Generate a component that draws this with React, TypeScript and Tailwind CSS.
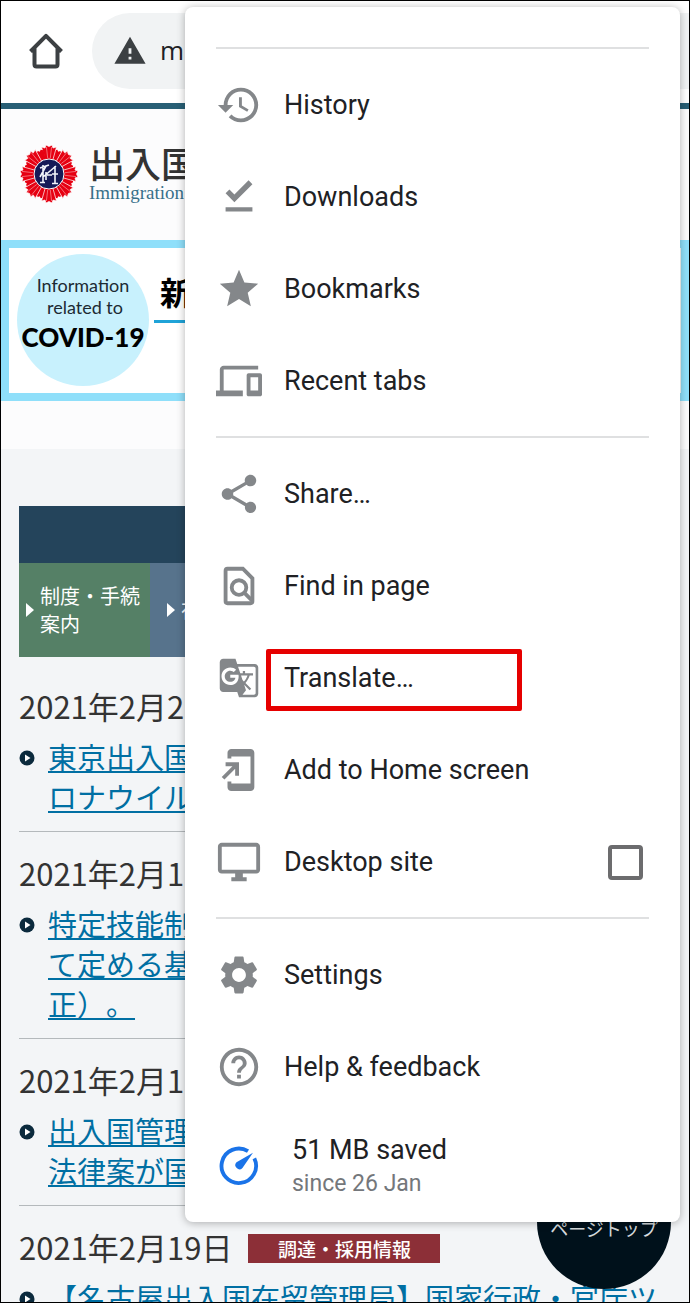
import type { ReactNode } from "react";
import {
  MdAddToHomeScreen,
  MdDevices,
  MdGTranslate,
  MdHelpOutline,
  MdHistory,
  MdOutlineDesktopWindows,
  MdSettings,
  MdShare,
  MdStar,
  MdWarning,
} from "react-icons/md";

type MenuItem = {
  label: string;
  icon: ReactNode;
  highlighted?: boolean;
};

type NewsItem = {
  date: string;
  lines: string[];
  tag?: string;
};

const DownloadDoneIcon = () => (
  <svg viewBox="0 0 24 24" fill="currentColor" className="size-[46px]">
    <path d="M17 3.300 9.600 10.700 7 8.100 5 10.100 9.600 14.700 19 5.300zM5 17.400h14v2.200H5z" />
  </svg>
);

const FindInPageIcon = () => (
  <svg
    viewBox="0 0 24 24"
    fill="none"
    stroke="currentColor"
    strokeWidth="2"
    className="size-[46px]"
  >
    <path d="M6 3h8l5 5v12a1 1 0 0 1-1 1H6a1 1 0 0 1-1-1V4a1 1 0 0 1 1-1z" />
    <circle cx="12" cy="12.8" r="3.8" />
    <path d="m14.7 15.5 4 4" />
  </svg>
);

const DataSaverIcon = () => (
  <svg viewBox="0 0 24 24" className="size-[46px]">
    <path
      d="M16.700 4.300A9 9 0 1 0 20 8"
      fill="none"
      stroke="currentColor"
      strokeWidth="2"
    />
    <path
      d="M19.300 5.100 13.800 13a2.100 2.100 0 1 1-3.100-2.900z"
      fill="currentColor"
    />
  </svg>
);

const HomeIcon = () => (
  <svg viewBox="0 0 36 36" className="size-9">
    <path
      d="M2.5 18.5 18 2.8l15.500 15.700M6.500 15v16.500a2 2 0 0 0 2 2h19a2 2 0 0 0 2-2V15"
      fill="none"
      stroke="#3c4043"
      strokeWidth="4"
      strokeLinejoin="round"
    />
  </svg>
);

const rays = [0, 45, 90, 135, 180, 225, 270, 315];

const Emblem = () => (
  <svg viewBox="-30 -30 60 60" className="size-[60px] shrink-0">
    {rays.map((angle) => (
      <g key={angle} transform={`rotate(${angle})`}>
        <path
          d="M-2.500-13-4-24-1.500-25.500 0-24 1.500-25.500 4-24 2.500-13z"
          transform="rotate(22.5)"
          fill="#e60012"
        />
        <path
          d="M-3.500-13-7.500-27-4-26-3-29 0-27.500 3-29 4-26 7.500-27 3.500-13z"
          fill="#e60012"
          stroke="#fff"
          strokeWidth=".7"
        />
        <path
          d="M-1.300-16-2.600-27M1.300-16 2.600-27"
          stroke="#fbd5d5"
          strokeWidth=".5"
        />
      </g>
    ))}
    <circle r="15" fill="#161a57" stroke="#fff" strokeWidth="1" />
    <path
      d="M-6-9v17M-9 8.500h5M6-8v17M3 9.500h6M-9-6 0-9M-3-8-9 3M-6 3 7-8M3 0h6M-2 1 3 1M-3-2v8"
      fill="none"
      stroke="#f2f4fa"
      strokeWidth="1.600"
    />
  </svg>
);

const BulletIcon = () => (
  <svg viewBox="0 0 16 16" className="mt-[14px] size-4 shrink-0">
    <circle cx="8" cy="8" r="7.500" fill="#0b2a3d" />
    <path d="M6 4.500v7L11.500 8z" fill="#fff" />
  </svg>
);

const menuGroups: MenuItem[][] = [
  [
    { label: "History", icon: <MdHistory className="size-[46px]" /> },
    { label: "Downloads", icon: <DownloadDoneIcon /> },
    { label: "Bookmarks", icon: <MdStar className="size-[46px]" /> },
    { label: "Recent tabs", icon: <MdDevices className="size-[46px]" /> },
  ],
  [
    { label: "Share…", icon: <MdShare className="size-[46px]" /> },
    { label: "Find in page", icon: <FindInPageIcon /> },
    {
      label: "Translate…",
      icon: <MdGTranslate className="size-[42px]" />,
      highlighted: true,
    },
    {
      label: "Add to Home screen",
      icon: <MdAddToHomeScreen className="size-[46px]" />,
    },
  ],
  [
    { label: "Settings", icon: <MdSettings className="size-[46px]" /> },
    {
      label: "Help & feedback",
      icon: <MdHelpOutline className="size-[46px]" />,
    },
  ],
];

const news: NewsItem[] = [
  { date: "2021年2月2", lines: ["東京出入国", "ロナウイル"] },
  { date: "2021年2月1", lines: ["特定技能制", "て定める基", "正）。"] },
  { date: "2021年2月1", lines: ["出入国管理", "法律案が国"] },
  {
    date: "2021年2月19日",
    lines: ["【名古屋出入国在留管理局】国家行政・官庁ツ"],
    tag: "調達・採用情報",
  },
];

const Divider = () => (
  <hr className="mx-[31px] mt-[9px] mb-[10px] border-t-2 border-[#dfe0e1]" />
);

const MenuRow = ({ label, icon, highlighted }: MenuItem) => (
  <button
    type="button"
    className="relative flex h-[92px] w-full items-center gap-[22px] px-[31px] text-left"
  >
    <span className="flex size-[46px] shrink-0 items-center justify-center text-[#84878a]">
      {icon}
    </span>
    <span>{label}</span>
    {highlighted && (
      <span className="absolute top-[17px] left-[81px] h-[62px] w-64 rounded-xs border-[5px] border-[#e60000]" />
    )}
  </button>
);

const Menu = () => (
  <nav className="absolute top-[6px] right-[9px] left-[184px] rounded-lg bg-white pt-[31px] font-[Roboto,sans-serif] text-[27px] text-[#202124] shadow-[0_1px_8px_rgba(0,0,0,0.3)]">
    <Divider />
    {menuGroups[0].map((item) => (
      <MenuRow key={item.label} {...item} />
    ))}
    <Divider />
    {menuGroups[1].map((item) => (
      <MenuRow key={item.label} {...item} />
    ))}
    <label className="flex h-[92px] items-center gap-[22px] pr-[37px] pl-[31px]">
      <MdOutlineDesktopWindows className="size-[46px] shrink-0 text-[#84878a]" />
      <span className="flex-1">Desktop site</span>
      <input
        type="checkbox"
        className="size-[35px] appearance-none rounded-sm border-4 border-[#6c6c6e]"
      />
    </label>
    <Divider />
    {menuGroups[2].map((item) => (
      <MenuRow key={item.label} {...item} />
    ))}
    <button
      type="button"
      className="flex h-[109px] w-full items-center gap-[30px] px-[31px] pb-[3px] text-left"
    >
      <span className="shrink-0 text-[#1a73e8]">
        <DataSaverIcon />
      </span>
      <span className="flex flex-col">
        <span className="leading-9">51 MB saved</span>
        <span className="text-[23px] leading-8 text-[#74777b]">
          since 26 Jan
        </span>
      </span>
    </button>
  </nav>
);

const NewsEntry = ({ date, lines, tag }: NewsItem) => (
  <article className="border-b border-[#b4b9bc] pb-[15px]">
    <div className="flex h-[68px] items-end gap-4 pb-[2px]">
      <p className="text-[31px] leading-[50px] whitespace-nowrap text-[#333]">
        {date}
      </p>
      {tag && (
        <span className="mb-[9px] w-48 bg-[#8c2f37] text-center text-[19px] leading-[29px] font-medium text-white">
          {tag}
        </span>
      )}
    </div>
    <div className="mt-[3px] flex gap-[13px]">
      <BulletIcon />
      <a
        href="#"
        className="text-[29px] leading-10 whitespace-nowrap text-[#006fa3] underline decoration-2 underline-offset-2 [text-decoration-skip-ink:none] [text-spacing-trim:space-all]"
      >
        {lines.map((line) => (
          <span key={line} className="block">
            {line}
          </span>
        ))}
      </a>
    </div>
  </article>
);

export default function App() {
  return (
    <div className="relative h-screen overflow-hidden border border-black bg-[#f3f5f7] font-['Noto_Sans_CJK_JP',sans-serif]">
      <div className="flex h-[108px] items-center gap-7 border-b-6 border-[#285f75] bg-white pb-[3px] pl-[27px]">
        <a href="#" aria-label="Home">
          <HomeIcon />
        </a>
        <div className="flex h-[76px] flex-1 items-center gap-[13px] rounded-l-full bg-[#f1f3f4] pl-[21px]">
          <MdWarning className="size-[34px] text-[#3c4043]" />
          <span className="font-['Open_Sans',sans-serif] text-[26px] text-[#202124]">
            m
          </span>
        </div>
      </div>

      <header className="flex h-[131px] items-center gap-[10px] bg-[#fcfcfd] pb-[2px] pl-[18px]">
        <Emblem />
        <div className="whitespace-nowrap">
          <p className="text-[36px] leading-[38px] font-medium text-[#333]">
            出入国
          </p>
          <p className="font-['Liberation_Serif',serif] text-[19px] leading-6 text-[#38708a]">
            Immigration
          </p>
        </div>
      </header>

      <section className="flex h-[161px] border-8 border-[#8fdffa] bg-white">
        <div className="mt-[6px] ml-2 flex size-[132px] shrink-0 flex-col items-center rounded-full bg-[#c8f1fd] pt-5 font-[Lato,sans-serif] text-[18px] leading-[22px] whitespace-nowrap text-[#1c2a33]">
          <span>Information</span>
          <span className="pl-1">related to</span>
          <strong className="text-[26px] leading-[38px] font-black text-black">
            COVID-19
          </strong>
        </div>
        <p className="mt-[23px] ml-[5px] h-[52px] w-52 border-b-[3px] border-[#1fa3d8] pl-[6px] text-[32px] leading-10 font-bold text-black">
          新
        </p>
      </section>
      <div className="h-12 bg-[#fcfcfd]" />

      <main className="px-[18px] pt-[57px]">
        <div className="h-[57px] bg-[#24445b]" />
        <div className="mb-2 flex h-[94px] text-xl leading-7 text-white">
          <a
            href="#"
            className="flex w-[131px] shrink-0 items-center gap-[6px] bg-[#558066] pl-[7px]"
          >
            <span className="border-y-[7px] border-l-8 border-y-transparent border-l-white" />
            <span className="whitespace-nowrap">
              制度・手続
              <br />
              案内
            </span>
          </a>
          <a
            href="#"
            className="flex flex-1 items-center gap-[6px] bg-[#57738c] pl-[17px]"
          >
            <span className="border-y-[7px] border-l-8 border-y-transparent border-l-white" />
            <span>在</span>
          </a>
        </div>
        {news.map((item) => (
          <NewsEntry key={item.lines[0]} {...item} />
        ))}
      </main>

      <a
        href="#"
        className="absolute right-[18px] bottom-[13px] flex size-[134px] items-center justify-center rounded-full bg-[#00111b] pt-3 text-[18px] whitespace-nowrap text-[#d5dadd]"
      >
        ページトップ
      </a>

      <Menu />
    </div>
  );
}
